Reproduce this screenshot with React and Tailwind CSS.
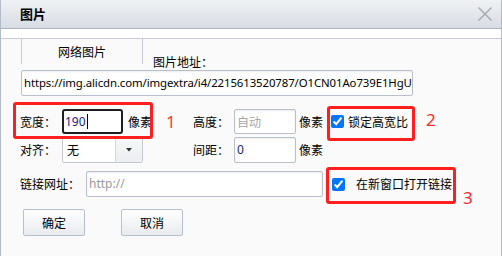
import React from "react";

const cn = "font-['Microsoft_YaHei','Noto_Sans_CJK_SC',sans-serif]";

function Field({ w, h = "h-[26px]", children, className = "" }) {
  return (
    <div
      className={`${w} ${h} border border-[#b9c0cb] rounded-[2px] bg-white shadow-[inset_0_1px_2px_rgba(0,0,0,0.08)] flex items-center pl-[2px] overflow-hidden whitespace-nowrap ${className}`}
    >
      {children}
    </div>
  );
}

function Check() {
  return (
    <input
      type="checkbox"
      defaultChecked
      readOnly
      className="w-[13px] h-[13px] shrink-0 accent-[#0075ff]"
    />
  );
}

export default function App() {
  return (
    <div
      className={`relative w-[502px] h-[256px] bg-[#fafafa] border-x border-[#b3bbc6] ${cn} text-[12px] leading-[14px] text-black overflow-hidden`}
    >
      {/* title bar */}
      <div className="h-[29px] border-b border-[#aab3be] bg-gradient-to-b from-[#eff1f4] to-[#d8dde4] flex items-center justify-between pl-[19px] pr-[8px]">
        <span className="text-[13px] font-bold">图片</span>
        <svg width="16" height="16" viewBox="0 0 16 16" className="mt-[-1px]">
          <path d="M1.5 1.5 L14.5 14.5 M14.5 1.5 L1.5 14.5" stroke="#a3a8ae" strokeWidth="1.4" />
        </svg>
      </div>
      <div className="h-[10px] bg-white border-b border-[#c9ccd7]" />

      {/* tab + label row */}
      <div className="flex items-start h-[31px] pl-[20px]">
        <div className="w-[122px] h-[25px] border-x border-[#c9ccd7] flex items-center justify-center pt-[1px]">
          网络图片
        </div>
        <span className="ml-[10px] mt-[16px]">图片地址：</span>
      </div>

      {/* url */}
      <div className="pl-[20px]">
        <Field w="w-[392px]" className="text-[11.4px] tracking-[-0.1px] font-['Noto_Sans',sans-serif]">
          https://img.alicdn.com/imgextra/i4/2215613520787/O1CN01Ao739E1HgU
        </Field>
      </div>

      {/* row 1 */}
      <div className="flex items-center mt-[13px] pl-[19px] h-[25px]">
        <span className="w-[42px]">宽度：</span>
        <div className="w-[131px] flex items-center">
          <div className="w-[61px] h-[25px] border-2 border-[#1e1e1e] rounded-[3px] bg-white flex items-center pl-[1px] font-['Noto_Sans',sans-serif] text-[#1a1a8a]">
            190<span className="w-px h-[15px] bg-black ml-[1px]" />
          </div>
          <span className="ml-[5px]">像素</span>
          <span className="ml-[14px] text-[17px] text-[#ff3a1e] font-['Noto_Sans',sans-serif]">1</span>
        </div>
        <span className="w-[41px]">高度：</span>
        <Field w="w-[62px]" h="h-[25px]" className="text-[#a6a6a6]">自动</Field>
        <span className="ml-[3px]">像素</span>
        <div className="ml-[8px] flex items-center">
          <Check />
          <span className="ml-[4px]">锁定高宽比</span>
        </div>
      </div>

      {/* row 2 */}
      <div className="flex items-center mt-[3px] pl-[19px] h-[26px]">
        <span className="w-[42px]">对齐：</span>
        <div className="w-[131px] flex items-center">
          <div className="w-[81px] h-[26px] border border-[#c2c8d1] rounded-[2px] bg-white flex">
            <span className="flex-1 pl-[4px] flex items-center">无</span>
            <span className="w-[27px] border-l border-[#d3d7dd] bg-gradient-to-b from-[#f6f7f8] to-[#eceef1] flex items-center justify-center">
              <svg width="6" height="4" viewBox="0 0 6 4">
                <path d="M0 0 H6 L3 3.5 Z" fill="#333" />
              </svg>
            </span>
          </div>
        </div>
        <span className="w-[41px]">间距：</span>
        <Field w="w-[62px]" className="font-['Noto_Sans',sans-serif] text-[#1a1a8a]">0</Field>
        <span className="ml-[3px]">像素</span>
      </div>

      {/* row 3 */}
      <div className="flex items-center mt-[8px] pl-[19px] h-[26px]">
        <span className="w-[66px]">链接网址：</span>
        <Field w="w-[237px]" className="font-['Noto_Sans',sans-serif] text-[#9a9a9a]">http://</Field>
        <div className="ml-[9px] flex items-center">
          <Check />
          <span className="ml-[11px]">在新窗口打开链接</span>
        </div>
      </div>

      {/* buttons */}
      <div className="flex mt-[12px] pl-[22px] gap-[36px]">
        <button className="w-[62px] h-[27px] border border-[#b8c0cb] rounded-[2px] bg-gradient-to-b from-[#ffffff] to-[#e8ebef] flex items-center justify-center">
          确定
        </button>
        <button className="w-[62px] h-[27px] border border-[#b8c0cb] rounded-[2px] bg-gradient-to-b from-[#ffffff] to-[#e8ebef] flex items-center justify-center">
          取消
        </button>
      </div>

      {/* annotations */}
      <div className="absolute left-[12px] top-[102px] w-[140px] h-[37px] border-[3px] border-[#ff1f1f] rounded-[3px]" />
      <div className="absolute left-[326px] top-[106px] w-[88px] h-[35px] border-[3px] border-[#ff1f1f] rounded-[3px]" />
      <span className="absolute left-[425px] top-[110px] text-[17px] leading-[20px] text-[#ff2a2a] font-['Noto_Sans',sans-serif]">2</span>
      <div className="absolute left-[325px] top-[167px] w-[130px] h-[37px] border-[3px] border-[#ff1f1f] rounded-[3px]" />
      <span className="absolute left-[462px] top-[188px] text-[17px] leading-[20px] text-[#ff2a2a] font-['Noto_Sans',sans-serif]">3</span>
    </div>
  );
}
